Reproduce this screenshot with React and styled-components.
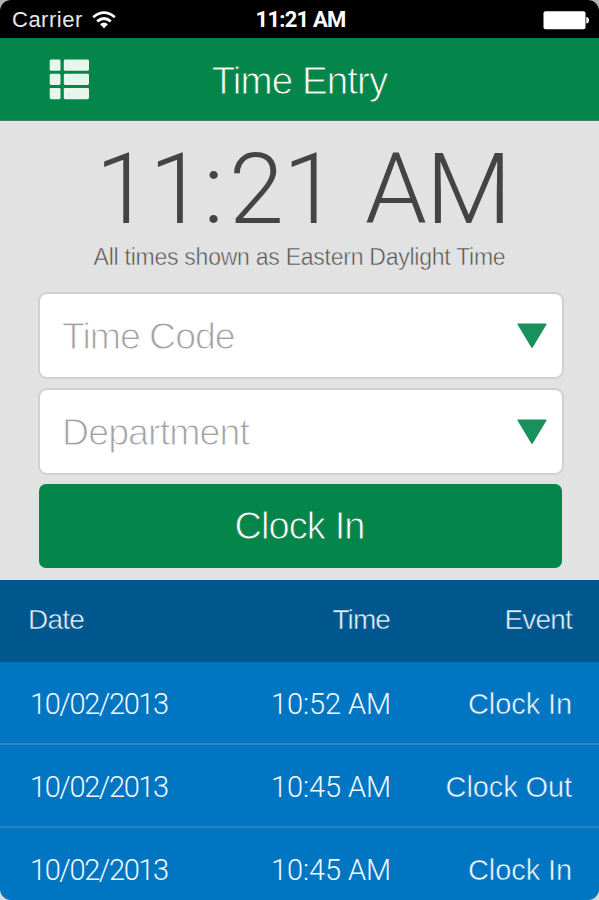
import React from 'react'
import styled, { createGlobalStyle, css } from 'styled-components'

const palette = {
  green: '#04854a',
  arrow: '#1a905d',
  grey: '#e2e2e2',
  navy: '#00578d',
  blue: '#0075c2',
}

const GlobalStyle = createGlobalStyle`
  * {
    box-sizing: border-box;
  }

  body {
    margin: 0;
    background: linear-gradient(#b4b4b4 50%, #dcdcdc 50%);
    font-family: 'Liberation Sans', Arial, sans-serif;
  }
`

// shaves the regular weight down to a light one by stroking in the surface colour
const light = (surface, amount) => css`
  -webkit-text-stroke: ${amount}px ${surface};
`

const Screen = styled.div`
  display: flex;
  flex-direction: column;
  width: 599px;
  height: 900px;
  overflow: hidden;
  border-radius: 11px;
  background: ${palette.grey};
`

const StatusBar = styled.header`
  display: grid;
  grid-template-columns: 1fr auto 1fr;
  align-items: center;
  flex: none;
  height: 38px;
  padding: 2px 10px 0 12px;
  background: #000;
  color: #fff;
  font-size: 22px;
  line-height: 36px;
`

const Carrier = styled.div`
  display: flex;
  align-items: center;
  gap: 9px;
  color: #e8e8e8;
  letter-spacing: 0.5px;
`

const StatusTime = styled.div`
  font-family: Roboto, sans-serif;
  font-weight: bold;
  letter-spacing: -0.8px;
`

const Battery = styled.svg`
  justify-self: end;
`

const NavBar = styled.nav`
  display: grid;
  grid-template-columns: 110px 1fr 110px;
  align-items: center;
  flex: none;
  height: 83px;
  border-bottom: 1px solid #3f8062;
  background: ${palette.green};
`

const MenuButton = styled.button`
  display: flex;
  margin: 0 0 0 49px;
  padding: 0;
  border: 0;
  background: none;
`

const Title = styled.h1`
  margin: 3px 0 0;
  color: #fff;
  font-size: 38.5px;
  font-weight: normal;
  line-height: 44px;
  letter-spacing: -0.9px;
  text-align: center;
  ${light(palette.green, 0.9)}
`

const ClockPanel = styled.section`
  display: flex;
  flex-direction: column;
  align-items: center;
  flex: none;
  height: 171px;
  padding-top: 19px;
`

const Clock = styled.div`
  padding-left: 7px;
  color: #444;
  font-family: Roboto, sans-serif;
  font-size: 99px;
  font-weight: 300;
  line-height: 98px;
  letter-spacing: -1px;
  word-spacing: 5px;
  white-space: nowrap;
`

const Colon = styled.span`
  letter-spacing: 5px;
`

const Zone = styled.div`
  margin-top: 6px;
  color: #505050;
  font-size: 23px;
  line-height: 26px;
  letter-spacing: -0.25px;
  white-space: nowrap;
  ${light(palette.grey, 0.5)}
`

const Form = styled.form`
  display: flex;
  flex-direction: column;
  gap: 9px;
  flex: none;
  height: 288px;
  padding: 0 35px 0 38px;
`

const Select = styled.div`
  display: flex;
  align-items: center;
  justify-content: space-between;
  height: 87px;
  padding: 0 15px 0 22px;
  border: 2px solid #d0d0d0;
  border-radius: 9px;
  background: #fff;
`

const Placeholder = styled.span`
  padding-top: 2px;
  color: #a2a2a2;
  font-size: 37.5px;
  letter-spacing: ${({ $spacing }) => $spacing}px;
  ${light('#fff', 1)}
`

const ClockInButton = styled.button`
  height: 84px;
  margin: 0 2px 0 1px;
  padding: 0 2px 0 0;
  border: 0;
  border-radius: 7px;
  background: ${palette.green};
  color: #fff;
  font: 38px/84px 'Liberation Sans', Arial, sans-serif;
  letter-spacing: -0.9px;
  ${light(palette.green, 0.9)}
`

const Table = styled.div`
  display: flex;
  flex-direction: column;
  flex: none;
`

const Row = styled.div`
  display: grid;
  grid-template-columns: 171px 190px 1fr;
  align-items: center;
  height: 83px;
  padding: 3px 27px 0 30px;
  border-bottom: 2px solid #2a83be;
  background: ${palette.blue};
  color: #f2f8ff;
  font-size: 29px;
  ${light(palette.blue, 0.55)}
`

const HeadRow = styled(Row)`
  height: 82px;
  padding: 0 27px 2px 28px;
  grid-template-columns: 172px 190px 1fr;
  border: 0;
  background: ${palette.navy};
  color: #e6effa;
  font-size: 28px;
  ${light(palette.navy, 0.5)}
`

const Cell = styled.span`
  letter-spacing: ${({ $spacing }) => $spacing || 0}px;
  text-align: ${({ $end }) => ($end ? 'right' : 'left')};
  white-space: nowrap;
`

const NumberCell = styled(Cell)`
  font-family: Roboto, sans-serif;
  font-weight: 300;
  -webkit-text-stroke: 0;
`

const entries = [
  { date: '10/02/2013', time: '10:52 AM', event: 'Clock In' },
  { date: '10/02/2013', time: '10:45 AM', event: 'Clock Out' },
  { date: '10/02/2013', time: '10:45 AM', event: 'Clock In' },
]

const WifiIcon = () => (
  <svg width="24" height="18" viewBox="0 0 24 18" fill="none" stroke="#fff" strokeWidth="2.8">
    <path d="M1.2 6.2 Q12 -3 22.8 6.2" />
    <path d="M5.2 10.4 Q12 4.6 18.8 10.4" />
    <path d="M8 13.2 Q12 9.8 16 13.2 L12 17.2 Z" fill="#fff" stroke="none" />
  </svg>
)

const ListIcon = () => (
  <svg width="41" height="41" viewBox="0 0 41 41" fill="#e6f6ec">
    {[0.5, 14.7, 28.9].map((y) => (
      <g key={y}>
        <rect x="0.7" y={y} width="10.8" height="11.3" rx="1.4" />
        <rect x="14.8" y={y} width="25.2" height="11.3" rx="1.4" />
      </g>
    ))}
  </svg>
)

const Arrow = () => (
  <svg width="30" height="26" viewBox="0 0 30 26">
    <path
      d="M1.2 1.2 H28.8 L15 24.2 Z"
      fill={palette.arrow}
      stroke={palette.arrow}
      strokeWidth="1.6"
      strokeLinejoin="round"
    />
  </svg>
)

const App = () => (
  <>
    <GlobalStyle />
    <Screen>
      <StatusBar>
        <Carrier>
          Carrier
          <WifiIcon />
        </Carrier>
        <StatusTime>11:21 AM</StatusTime>
        <Battery width="46" height="19" viewBox="0 0 46 19" fill="#fff">
          <rect x="0.5" y="0.3" width="42" height="18" rx="2" />
          <path d="M43.3 6 Q46 6.4 46 9.3 Q46 12.2 43.3 12.6 Z" />
        </Battery>
      </StatusBar>
      <NavBar>
        <MenuButton aria-label="Menu">
          <ListIcon />
        </MenuButton>
        <Title>Time Entry</Title>
      </NavBar>
      <ClockPanel>
        <Clock>
          11<Colon>:</Colon>21 AM
        </Clock>
        <Zone>All times shown as Eastern Daylight Time</Zone>
      </ClockPanel>
      <Form>
        <Select>
          <Placeholder $spacing={-1.05}>Time Code</Placeholder>
          <Arrow />
        </Select>
        <Select>
          <Placeholder $spacing={-0.9}>Department</Placeholder>
          <Arrow />
        </Select>
        <ClockInButton type="button">Clock In</ClockInButton>
      </Form>
      <Table>
        <HeadRow>
          <Cell $spacing={-0.8}>Date</Cell>
          <Cell $spacing={-0.9} $end>Time</Cell>
          <Cell $spacing={-0.8} $end>Event</Cell>
        </HeadRow>
        {entries.map(({ date, time, event }, i) => (
          <Row key={i}>
            <NumberCell $spacing={-1.4}>{date}</NumberCell>
            <NumberCell $spacing={-0.1} $end>{time}</NumberCell>
            <Cell $spacing={-0.1} $end>{event}</Cell>
          </Row>
        ))}
      </Table>
    </Screen>
  </>
)

export default App
